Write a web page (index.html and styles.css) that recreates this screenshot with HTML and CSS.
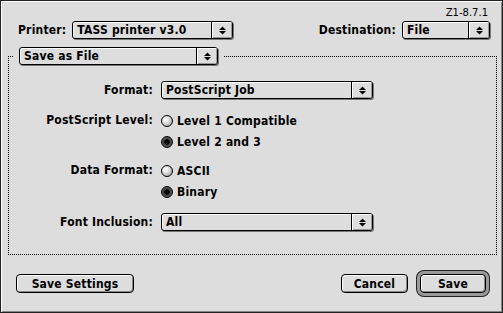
FILE: index.html
```html
<!DOCTYPE html>
<html lang="en">
<head>
    <meta charset="UTF-8">
    <title>Save as File</title>
    <link rel="stylesheet" href="styles.css">
</head>
<body>
    <div class="window">
        <div class="version">Z1-8.7.1</div>

        <div class="top-row">
            <div class="field">
                <span class="label">Printer:</span>
                <div class="popup pop-printer">
                    <span class="popup-text">TASS printer v3.0</span>
                    <span class="popup-arrow"><svg width="7" height="9" viewBox="0 0 7 9"><path d="M0 4H7L3.5 0.5Z M0 5H7L3.5 8.5Z" fill="#000"/></svg></span>
                </div>
            </div>
            <div class="field">
                <span class="label">Destination:</span>
                <div class="popup pop-dest">
                    <span class="popup-text">File</span>
                    <span class="popup-arrow"><svg width="7" height="9" viewBox="0 0 7 9"><path d="M0 4H7L3.5 0.5Z M0 5H7L3.5 8.5Z" fill="#000"/></svg></span>
                </div>
            </div>
        </div>

        <fieldset class="group">
            <legend>
                <div class="popup pop-panel">
                    <span class="popup-text">Save as File</span>
                    <span class="popup-arrow"><svg width="7" height="9" viewBox="0 0 7 9"><path d="M0 4H7L3.5 0.5Z M0 5H7L3.5 8.5Z" fill="#000"/></svg></span>
                </div>
            </legend>

            <div class="form">
                <div class="label">Format:</div>
                <div class="control">
                    <div class="popup pop-wide">
                        <span class="popup-text">PostScript Job</span>
                        <span class="popup-arrow"><svg width="7" height="9" viewBox="0 0 7 9"><path d="M0 4H7L3.5 0.5Z M0 5H7L3.5 8.5Z" fill="#000"/></svg></span>
                    </div>
                </div>

                <div class="label radio-label sp-level">PostScript Level:</div>
                <div class="control sp-level">
                    <div class="radio"><span class="dot"></span>Level 1 Compatible</div>
                    <div class="radio"><span class="dot on"></span>Level 2 and 3</div>
                </div>

                <div class="label radio-label sp-data">Data Format:</div>
                <div class="control sp-data">
                    <div class="radio"><span class="dot"></span>ASCII</div>
                    <div class="radio"><span class="dot on"></span>Binary</div>
                </div>

                <div class="label sp-font">Font Inclusion:</div>
                <div class="control sp-font">
                    <div class="popup pop-wide">
                        <span class="popup-text">All</span>
                        <span class="popup-arrow"><svg width="7" height="9" viewBox="0 0 7 9"><path d="M0 4H7L3.5 0.5Z M0 5H7L3.5 8.5Z" fill="#000"/></svg></span>
                    </div>
                </div>
            </div>
        </fieldset>

        <div class="buttons">
            <button class="btn btn-settings">Save Settings</button>
            <div class="btn-group">
                <button class="btn btn-cancel">Cancel</button>
                <button class="btn btn-save">Save</button>
            </div>
        </div>
    </div>
</body>
</html>
```

FILE: styles.css
```css
body{margin:0;background:#ddd;}

.window{width:503px;height:313px;box-sizing:border-box;border:1px solid #222;
box-shadow:inset 1px 1px 0 #fff,inset -1px -1px 0 #888;background:#ddd;
padding:6px 5px 0 7px;font:bold 12px "DejaVu Sans Condensed","DejaVu Sans",sans-serif;letter-spacing:.2px;color:#000;}

.version{font:10px "DejaVu Sans",sans-serif;letter-spacing:0;line-height:12px;text-align:right;padding-right:9px;}

.top-row{display:flex;justify-content:space-between;margin-top:2px;padding:0 7px 0 10px;}
.field{display:flex;align-items:center;gap:6px;}
.field .label{line-height:18px;}

/* popup menus */
.popup{display:flex;height:18px;box-sizing:border-box;border:1px solid #000;border-radius:3px;background:#ddd;
box-shadow:1px 1px 0 #777,inset 1px 1px 0 #fff;overflow:hidden;}
.popup-text{flex:1;padding-left:4px;line-height:16px;white-space:nowrap;}
.popup-arrow{width:20px;border-left:1px solid #000;display:flex;align-items:center;justify-content:center;
box-shadow:inset 1px 1px 0 #fff,inset -1px -1px 0 #999;}
.pop-printer{width:161px;}
.pop-dest{width:88px;}
.pop-panel{width:199px;}
.pop-wide{width:212px;}

/* group box */
.group{margin:8px 0 0;padding:0 0 23px;border:1px dotted #000;min-width:0;}
.group legend{padding:0 6px 0 6px;margin-left:4px;}

.form{display:grid;grid-template-columns:144px 1fr;column-gap:8px;padding-top:16px;}
.form .label{text-align:right;line-height:18px;}
.form .radio-label{line-height:21px;}
.sp-level{margin-top:11px;}
.sp-data{margin-top:8px;}
.sp-font{margin-top:11px;}

.radio{display:flex;align-items:center;gap:4px;height:21px;}
.dot{width:12px;height:12px;box-sizing:border-box;border-radius:50%;border:1px solid #000;
background:radial-gradient(circle at 35% 35%,#fff 0,#eee 25%,#aaa 80%);}
.dot.on{background:radial-gradient(circle,#000 0,#000 2.5px,#444 3px,#666 100%);}

/* buttons */
.buttons{display:flex;justify-content:space-between;margin-top:19px;padding:0 11px 0 8px;}
.btn-group{display:flex;gap:12px;}
.btn{height:19px;box-sizing:border-box;border:1px solid #000;border-radius:4px;background:#ddd;
box-shadow:inset 1px 1px 0 #fff,inset -1px -1px 0 #888;font:inherit;letter-spacing:inherit;color:#000;padding:0;line-height:16px;}
.btn-settings{width:118px;}
.btn-cancel{width:67px;}
.btn-save{width:66px;box-shadow:inset 1px 1px 0 #fff,inset -1px -1px 0 #888,0 0 0 3px #999,0 0 0 4px #222;}
```
